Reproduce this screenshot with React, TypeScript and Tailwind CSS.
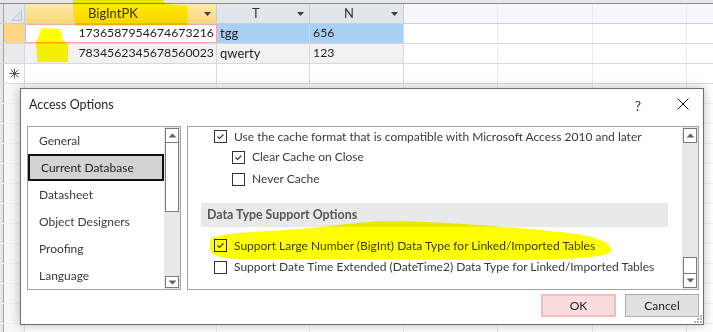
import React from "react";

const Check = ({ checked }: { checked?: boolean }) => (
  <span className="w-[13px] h-[13px] border border-[#333333] bg-white flex items-center justify-center shrink-0">
    {checked && (
      <svg width="11" height="11" viewBox="0 0 11 11">
        <path d="M2.5 5.5 L4.5 7.5 L8.5 3.5" stroke="#333333" strokeWidth="1.1" fill="none" />
      </svg>
    )}
  </span>
);

const Arrow = ({ up }: { up?: boolean }) => (
  <svg width="9" height="5" viewBox="0 0 9 5">
    {up ? <path d="M0.5 4.5 L4.5 0.5 L8.5 4.5 Z" fill="#606060" /> : <path d="M0.5 0.5 L8.5 0.5 L4.5 4.5 Z" fill="#606060" />}
  </svg>
);

const DropArrow = () => (
  <svg width="7" height="4" viewBox="0 0 7 4" className="shrink-0">
    <path d="M0 0 L7 0 L3.5 4 Z" fill="#3c3c3c" />
  </svg>
);

const BlankCells = ({ header }: { header?: boolean }) => (
  <>
    <div className={`w-[94px] border-r border-[#e7eaee] ${header ? "bg-[#f5f7fb]" : "bg-white"}`} />
    <div className={`w-[95px] border-r border-[#e7eaee] ${header ? "bg-[#f5f7fb]" : "bg-white"}`} />
    <div className={`w-[94px] border-r border-[#e7eaee] ${header ? "bg-[#f5f7fb]" : "bg-white"}`} />
    <div className={`flex-1 ${header ? "bg-[#f5f7fb]" : "bg-white"}`} />
  </>
);

const LeftEdge = () => (
  <>
    <div className="w-[3px] bg-[#e6e6e6]" />
    <div className="w-[1px] bg-[#a3a3a3]" />
  </>
);

export default function App() {
  const emptyRows = Array.from({ length: 13 });
  return (
    <div className="relative w-[713px] h-[332px] overflow-hidden bg-white font-[family-name:Lato,sans-serif]">
      {/* Datasheet */}
      <div className="flex flex-col text-[12px] text-[#1e1e1e]">
        <div className="h-[3px] bg-[#e6e6e6]" />
        <div className="h-[1px] bg-[#8c8c8c]" />
        {/* header */}
        <div className="flex h-[20px] border-b border-[#c9cfd6]">
          <LeftEdge />
          <div className="w-[21px] border-r border-[#c9cfd6] bg-[#e4e7ec] flex items-end justify-end pr-[2px] pb-[2px]">
            <svg width="11" height="11" viewBox="0 0 11 11">
              <path d="M0.5 10.5 L10.5 0.5 L10.5 10.5 Z" fill="#dde1e6" stroke="#c3c8cf" strokeWidth="1" />
            </svg>
          </div>
          <div className="w-[192px] border-r border-[#c9cfd6] bg-gradient-to-b from-[#fde9a9] to-[#fbd67a] flex items-center pl-[63px] pr-[5px]">
            <span className="flex-1 text-[13px] text-[#333333]">BigIntPK</span>
            <DropArrow />
          </div>
          <div className="w-[93px] border-r border-[#c9cfd6] bg-[#e2e5ea] flex items-center pl-[35px] pr-[5px]">
            <span className="flex-1 text-[13px] text-[#333333]">T</span>
            <DropArrow />
          </div>
          <div className="w-[94px] border-r border-[#c9cfd6] bg-[#e2e5ea] flex items-center pl-[34px] pr-[5px]">
            <span className="flex-1 text-[13px] text-[#333333]">N</span>
            <DropArrow />
          </div>
          <BlankCells header />
        </div>
        {/* row 1 */}
        <div className="flex h-[20px] border-b border-[#d5dae1]">
          <LeftEdge />
          <div className="w-[21px] border-r border-[#d5dae1] bg-[#fcd883]" />
          <div className="w-[192px] border border-[#f3a9a9] bg-white flex items-center justify-end pr-[2px] text-[12.3px]">
            1736587954674673216
          </div>
          <div className="w-[93px] border-r border-[#d5dae1] bg-[#a9cff2] flex items-center pl-[3px] text-[13px]">tgg</div>
          <div className="w-[94px] border-r border-[#d5dae1] bg-[#a9cff2] flex items-center pl-[3px] text-[12.3px]">656</div>
          <BlankCells />
        </div>
        {/* row 2 */}
        <div className="flex h-[20px] border-b border-[#d5dae1]">
          <LeftEdge />
          <div className="w-[21px] border-r border-[#d5dae1] bg-[#e8eaee]" />
          <div className="w-[192px] border-r border-[#d5dae1] bg-[#f2f2f2] flex items-center justify-end pr-[2px] text-[12.3px]">
            7834562345678560023
          </div>
          <div className="w-[93px] border-r border-[#d5dae1] bg-[#f2f2f2] flex items-center pl-[3px] text-[13px]">qwerty</div>
          <div className="w-[94px] border-r border-[#d5dae1] bg-[#f2f2f2] flex items-center pl-[3px] text-[12.3px]">123</div>
          <BlankCells />
        </div>
        {/* new row */}
        <div className="flex h-[20px] border-b border-[#d5dae1]">
          <LeftEdge />
          <div className="w-[21px] border-r border-[#d5dae1] bg-white flex items-center justify-center">
            <svg width="11" height="11" viewBox="0 0 11 11">
              <g stroke="#555555" strokeWidth="1">
                <path d="M5.5 0.5 V10.5" />
                <path d="M0.5 5.5 H10.5" />
                <path d="M1.8 1.8 L9.2 9.2" />
                <path d="M9.2 1.8 L1.8 9.2" />
              </g>
            </svg>
          </div>
          <div className="w-[192px] border-r border-[#d5dae1] bg-white" />
          <div className="w-[93px] border-r border-[#d5dae1] bg-white" />
          <div className="w-[94px] border-r border-[#d5dae1] bg-white" />
          <BlankCells />
        </div>
        {emptyRows.map((_, i) => (
          <div key={i} className="flex h-[20px] border-b border-[#eceef1]">
            <LeftEdge />
            <div className="w-[21px] border-r border-[#e3e6ea] bg-[#f7f7f7]" />
            <div className="w-[192px] border-r border-[#eceef1] bg-white" />
            <div className="w-[93px] border-r border-[#eceef1] bg-white" />
            <div className="w-[94px] border-r border-[#eceef1] bg-white" />
            <BlankCells />
          </div>
        ))}
      </div>

      {/* Highlights on datasheet */}
      <svg className="absolute left-0 top-0 mix-blend-multiply pointer-events-none" width="713" height="90" viewBox="0 0 713 90">
        <path d="M73 0 L163 0 L165 4 L187 6 Q189 15 187 25 L76 26 Q72 13 73 0 Z" fill="#ffff00" />
        <path d="M41 28 L60 29 L62 40 L68 44 L68 62 L37 62 L36 42 L39 35 Z" fill="#ffff00" />
      </svg>

      {/* Dialog */}
      <div className="absolute left-[20px] top-[88px] w-[684px] h-[237px] border border-[#6e6e6e] bg-white shadow-[0_0_10px_rgba(0,0,0,0.28)] flex flex-col text-[12px] text-[#3a3a3a]">
        <div className="h-[37px] flex items-start pt-[7px] pl-[8px] pr-[14px]">
          <span className="flex-1 text-[12.5px] text-[#1e1e1e]">Access Options</span>
          <span className="text-[14px] text-[#333333] mr-[36px] -mt-[1px]">?</span>
          <svg width="12" height="12" viewBox="0 0 12 12" className="mt-[2px]">
            <path d="M0.5 0.5 L11.5 11.5 M11.5 0.5 L0.5 11.5" stroke="#222222" strokeWidth="1" />
          </svg>
        </div>
        <div className="flex gap-[6px] pl-[6px] pr-[4px]">
          {/* left list */}
          <div className="w-[154px] h-[164px] border border-[#a3a3a3] flex">
            <div className="flex-1 flex flex-col">
              {["General", "Current Database", "Datasheet", "Object Designers", "Proofing", "Language"].map((t) => (
                <div
                  key={t}
                  className={`h-[27px] flex items-center pl-[11px] ${t === "Current Database" ? "border-2 border-[#111111] bg-[#d3d3d3] pl-[9px] text-[#222222]" : ""}`}
                >
                  {t}
                </div>
              ))}
            </div>
            <div className="w-[16px] bg-[#e8e8e8] flex flex-col px-[1px] pt-[1px] pb-[1px]">
              <div className="h-[15px] border border-[#7b7b7b] bg-white flex items-center justify-center">
                <Arrow up />
              </div>
              <div className="h-[70px] -mt-[1px] border border-[#7b7b7b] bg-white" />
              <div className="flex-1" />
              <div className="h-[12px] border border-[#7b7b7b] bg-white flex items-center justify-center">
                <Arrow />
              </div>
            </div>
          </div>
          {/* right panel */}
          <div className="flex-1 h-[164px] border border-[#a3a3a3] flex">
            <div className="flex-1 flex flex-col">
              <div className="h-[19px] flex items-center pl-[26px] gap-[7px]">
                <Check checked />
                <span>Use the cache format that is compatible with Microsoft Access 2010 and later</span>
              </div>
              <div className="h-[22px] flex items-center pl-[44px] gap-[7px]">
                <Check checked />
                <span>Clear Cache on Close</span>
              </div>
              <div className="h-[22px] flex items-center pl-[44px] gap-[7px]">
                <Check />
                <span>Never Cache</span>
              </div>
              <div className="mt-[13px] ml-[13px] mr-[14px] h-[24px] bg-[#e9e9e9] flex items-center pl-[6px] font-bold text-[12.4px] text-[#555555]">
                Data Type Support Options
              </div>
              <div className="mt-[8px] h-[21px] flex items-center pl-[26px] gap-[7px]">
                <Check checked />
                <span>Support Large Number (BigInt) Data Type for Linked/Imported Tables</span>
              </div>
              <div className="h-[22px] flex items-center pl-[26px] gap-[7px]">
                <Check />
                <span>Support Date Time Extended (DateTime2) Data Type for Linked/Imported Tables</span>
              </div>
            </div>
            <div className="w-[16px] bg-[#e8e8e8] flex flex-col px-[1px] pt-[1px] pb-[1px]">
              <div className="h-[15px] border border-[#7b7b7b] bg-white flex items-center justify-center">
                <Arrow up />
              </div>
              <div className="flex-1" />
              <div className="h-[17px] border border-[#7b7b7b] bg-white" />
              <div className="h-[15px] -mt-[1px] border border-[#7b7b7b] bg-white flex items-center justify-center">
                <Arrow />
              </div>
            </div>
          </div>
        </div>
        <div className="mt-[4px] flex justify-end gap-[9px] pr-[4px]">
          <button className="w-[75px] h-[23px] border-2 border-[#f3bcbc] bg-[#f9dcdc] text-[#222222] text-[12px]">OK</button>
          <button className="w-[74px] h-[23px] border border-[#adadad] bg-[#e1e1e1] text-[#222222] text-[12px]">Cancel</button>
        </div>
        <svg className="absolute right-[1px] bottom-[1px]" width="8" height="8" viewBox="0 0 8 8">
          <g fill="#b0b0b0">
            <rect x="6" y="0" width="2" height="2" />
            <rect x="3" y="3" width="2" height="2" />
            <rect x="6" y="3" width="2" height="2" />
            <rect x="0" y="6" width="2" height="2" />
            <rect x="3" y="6" width="2" height="2" />
            <rect x="6" y="6" width="2" height="2" />
          </g>
        </svg>
      </div>

      {/* Highlight in dialog */}
      <svg className="absolute left-0 top-0 mix-blend-multiply pointer-events-none" width="713" height="332" viewBox="0 0 713 332">
        <path
          d="M212 238 C225 232 260 232 300 229 C330 226 360 222 385 221 C430 221 500 226 560 232 C600 236 614 244 610 252 C605 258 560 260 500 260 L240 259 C222 259 210 256 210 248 C210 242 210 240 212 238 Z"
          fill="#ffff00"
        />
      </svg>
    </div>
  );
}
